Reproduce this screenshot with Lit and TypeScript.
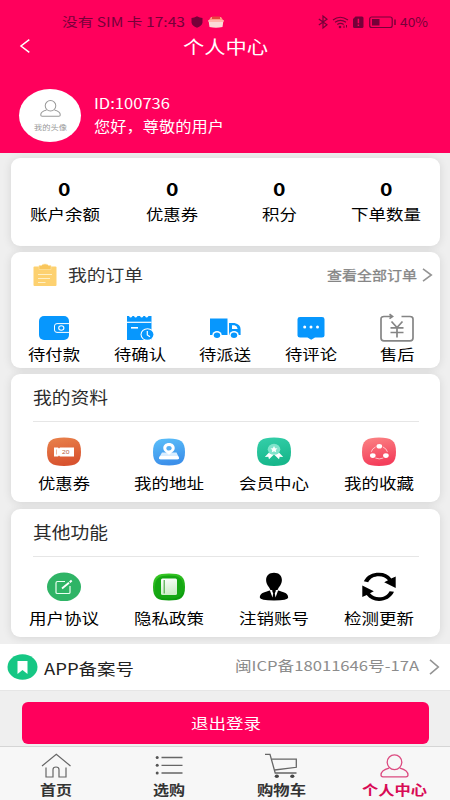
import { LitElement, html, svg, css } from "lit";
import { customElement, property } from "lit/decorators.js";

// One line of text drawn at a fixed advance width; the box centre is the optical centre of the glyphs.
@customElement("fit-text")
class FitText extends LitElement {
  @property() text = "";
  @property({ type: Number }) w = 60;
  @property({ type: Number }) size = 15;
  static styles = css`
    :host { display: block; flex: none; }
    svg { display: block; overflow: visible; }
    text { font-family: "Noto Sans CJK SC", sans-serif; fill: currentColor; }
  `;
  render() {
    const h = 20;
    return html`<svg width=${this.w} height=${h}>
      <text x="0" y=${h / 2 + this.size * 0.38} font-size=${this.size} textLength=${this.w} lengthAdjust="spacingAndGlyphs">${this.text}</text>
    </svg>`;
  }
}

const icon = (w: number, h: number, body: unknown) =>
  html`<svg width=${w} height=${h} viewBox="0 0 ${w} ${h}" fill="none">${body}</svg>`;

const person = (c: string, sw: number) => svg`
  <ellipse cx="14.5" cy="8.2" rx="7.3" ry="7.4" stroke=${c} stroke-width=${sw}/>
  <path d="M9 14.2C4 15.6 1 18 1 21Q1 22.8 3 22.8H26Q28 22.8 28 21C28 18 25 15.6 20 14.2" stroke=${c} stroke-width=${sw}/>`;

const orders = [
  { label: "待付款", w: 52, icon: icon(30, 26, svg`
    <rect x="0" y="1" width="30" height="24" rx="5" fill="#0797fd"/>
    <path d="M30 8.6H18Q15.5 8.6 15.5 11V15Q15.5 17.4 18 17.4H30" stroke="#fff" stroke-width="1"/>
    <ellipse cx="22.3" cy="13" rx="2.6" ry="2.2" stroke="#fff" stroke-width="1.1"/>`) },
  { label: "待确认", w: 52, icon: icon(28, 26, svg`
    <path d="M1 1H3Q4.500 4 6.500 1H8Q9.500 4 11.500 1H14Q15.500 4 17.500 1H19Q20.500 4 22.500 1H25.500V25H1Z" fill="#0797fd"/>
    <path d="M1 7.300H25.500" stroke="#fff" stroke-width="1.200"/><path d="M5 12.800H12" stroke="#fff" stroke-width="1.600"/>
    <ellipse cx="21.500" cy="19.500" rx="7" ry="6.300" fill="#fff"/><ellipse cx="21.500" cy="19.500" rx="5.900" ry="5.200" fill="#0797fd"/>
    <path d="M21.300 16V20L24 21.700" stroke="#fff" stroke-width="1.200"/>`) },
  { label: "待派送", w: 52, icon: icon(32, 26, svg`
    <path d="M1 3.500H18.500V20H1Z" fill="#0797fd"/>
    <path d="M20 8H25.500Q31.600 9.500 31.600 14V20H20Z" fill="#0797fd"/>
    <path d="M23 10.200H25.500Q28.200 11 28.700 14H23Z" fill="#fff"/>
    <ellipse cx="8" cy="20" rx="4.700" ry="4" fill="#fff"/><ellipse cx="8" cy="20.300" rx="3.200" ry="2.700" fill="#0797fd"/>
    <ellipse cx="25" cy="20" rx="4.700" ry="4" fill="#fff"/><ellipse cx="25" cy="20.300" rx="3.200" ry="2.700" fill="#0797fd"/>`) },
  { label: "待评论", w: 52, icon: icon(28, 26, svg`
    <path d="M3 2H25Q27.500 2 27.500 4.300V20.500Q27.500 22.500 25 22.500H18L14.200 24.800L10.500 22.500H3Q.5 22.500 .5 20.500V4.300Q.5 2 3 2Z" fill="#0797fd"/>
    <g fill="#fff"><circle cx="7.700" cy="12" r="1.500"/><circle cx="14" cy="12" r="1.500"/><circle cx="20.500" cy="12" r="1.500"/></g>`) },
  { label: "售后", w: 34.500, icon: icon(34, 28, svg`
    <g stroke="#858585" stroke-width="1.700"><path d="M12 2.500H4Q1 2.500 1 5V24Q1 26.800 4 26.800H30Q33 26.800 33 24V5Q33 2.500 30 2.500H21.500"/>
    <path d="M9.500 .3L12.500 2.500L9.500 4.600"/><path d="M11.500 7.500L17 13.500L22.500 7.500M17 13.500V23.500M10.500 13.800H23.500M10.500 18.500H23.500"/></g>`) },
];

const squircle = (g: string) => svg`<path d="M17 .5C29.500 .5 34 3.500 34 14.800S29.500 29 17 29S0 26 0 14.800S4.500 .5 17 .5Z" fill="url(#${g})"/>`;
const grad = (id: string, a: string, b: string) => svg`<defs><linearGradient id=${id} x1="0" y1="0" x2=".25" y2="1"><stop stop-color=${a}/><stop offset="1" stop-color=${b}/></linearGradient></defs>`;

const mine = [
  { label: "优惠券", w: 52, icon: icon(34, 30, svg`${grad("go", "#e9834c", "#d8532f")}${squircle("go")}
    <path d="M7 10.500H11L12 11.500L13 10.500H27V19.500H13L12 18.500L11 19.500H7Z" fill="#fff"/>
    <path d="M9.500 12.500V17.500" stroke="#e9a98c" stroke-width=".8"/>
    <text x="15" y="16.900" font-size="5.200" textLength="7.500" lengthAdjust="spacingAndGlyphs" fill="#b8643f" font-family="Liberation Sans, sans-serif">20</text>`) },
  { label: "我的地址", w: 70, icon: icon(34, 30, svg`${grad("gb", "#5bc0fa", "#3c90ea")}
    <path d="M17 1.500C28.500 1.500 33 4.500 33 15S28.500 28.500 17 28.500S1 26 1 15S5.500 1.500 17 1.500Z" fill="url(#gb)"/>
    <path d="M10 15.500H24.500L27 20.700Q27.300 22.300 25.500 22.300H8.500Q6.700 22.300 7 20.700Z" fill="#d9edff"/>
    <path d="M8 19H26L27 21Q27 22.300 25.500 22.300H8.500Q7 22.300 7 21Z" fill="#fff"/>
    <path d="M17 6C20.500 6 22.700 8.300 22.700 11C22.700 14.300 19.500 15.800 17 17.700C14.500 15.800 11.300 14.300 11.300 11C11.300 8.300 13.500 6 17 6Z" fill="#fff"/>
    <ellipse cx="17" cy="11.200" rx="2.600" ry="2.300" fill="#55aff3"/>`) },
  { label: "会员中心", w: 70, icon: icon(34, 30, svg`${grad("gg", "#35cfaa", "#17b78b")}${squircle("gg")}
    <path d="M12 15.500L7.800 20L11.300 19.800L12 22.300L17 17.500L22 22.300L22.700 19.800L26.200 20L22 15.500Z" fill="#fff"/>
    <ellipse cx="17" cy="12.300" rx="6.300" ry="5.500" fill="#80e4cb"/>
    <path d="M17 9L18.100 11.200L20.500 11.400L18.700 13.100L19.200 15.300L17 14.200L14.800 15.300L15.300 13.100L13.500 11.400L15.900 11.200Z" fill="#fff"/>`) },
  { label: "我的收藏", w: 70, icon: icon(34, 30, svg`${grad("gr", "#fb8585", "#f43e5b")}${squircle("gr")}
    <g stroke="#ffd0d2" stroke-width=".9"><path d="M13.500 10Q10 11.700 9.300 14.800M21 10Q24.700 11.700 25.400 14.800M13.300 21Q17.300 22.800 21.300 21"/></g>
    <g fill="#fff"><ellipse cx="17.300" cy="9.300" rx="2.800" ry="2.300"/><ellipse cx="10.800" cy="18.600" rx="2.800" ry="2.300"/><ellipse cx="23.900" cy="18.600" rx="2.800" ry="2.300"/></g>`) },
];

const others = [
  { label: "用户协议", w: 70, icon: icon(34, 30, svg`<ellipse cx="17" cy="14.800" rx="17" ry="14.300" fill="#2fb466"/>
    <path d="M18 9.500H10.500Q9 9.500 9 11V20.500Q9 21.500 10.500 21.500H21.500Q23 21.500 23 20.500V14" stroke="#e9fff1" stroke-width="1.200"/>
    <path d="M15 16.500L22 10.700" stroke="#fff" stroke-width="1.800"/><path d="M22.700 10.200L24.700 8.500" stroke="#fff" stroke-width="2"/>`) },
  { label: "隐私政策", w: 70, icon: icon(34, 30, svg`${grad("gn", "#3ccb27", "#0b9c0c")}${grad("gp", "#ffffff", "#cdeec8")}
    <path d="M17 1.500C28.500 1.500 33 4 33 15S28.500 28.500 17 28.500S1 26 1 15S5.500 1.500 17 1.500Z" fill="url(#gn)"/>
    <path d="M17 3.500C27 3.500 31 6 31 15S27 26.500 17 26.500S3 24 3 15S7 3.500 17 3.500Z" fill="#15a713"/>
    <rect x="9" y="6.500" width="16" height="16.500" rx="1.500" fill="url(#gp)"/><path d="M12.200 8V21.500" stroke="#45a83f" stroke-width="1.100"/>`) },
  { label: "注销账号", w: 70, icon: icon(34, 30, svg`
    <path d="M17 .7C21.800 .7 24.900 3.500 24.900 8C24.900 12.500 22 14.500 20.500 18H13.500C12 14.500 9.100 12.500 9.100 8C9.100 3.500 12.200 .7 17 .7Z" fill="#000"/>
    <path d="M12.500 18.500L9 19.700C4.500 21 3 22.500 2.800 25.500Q3 28.500 17 28.500T31.200 25.500C31 22.500 29.500 21 25 19.700L21.500 18.500Z" fill="#000"/>
    <path d="M12.700 18L15.500 25.500L16.200 21.500L14.800 18ZM21.300 18L18.500 25.500L17.800 21.500L19.200 18Z" fill="#fff"/>
    <path d="M14.500 17.500H19.500L17 20Z" fill="#000"/>`) },
  { label: "检测更新", w: 70, icon: icon(34, 30, svg`<g fill="#000">
    <path d="M1.800 9.300C5 3 10.500 .7 17 .7C22.500 .7 26.500 2.600 29.300 6.500L33.700 4.500V16L22.200 10.300L26 8.300C23.500 5.400 20.800 4.300 17 4.300C11.800 4.300 8.300 6.300 6.200 10.300Z"/>
    <path d="M32 19.800C29 26 23.500 28.900 17 28.900C11.500 28.900 7.500 27 4.700 23.100L.3 25V13.600L11.800 19.300L8 21.300C10.500 24.200 13.200 25.300 17 25.300C22.200 25.300 25.200 23.400 27.600 19.300Z"/></g>`) },
];

const tabs = [
  { label: "首页", w: 32, icon: icon(30, 26, svg`<g stroke="#666" stroke-width="1.200"><path d="M1 13L15.300 1.200L29.500 13"/><path d="M5 14.500V24H12V16.500Q12 14 15 14T18 16.500V24H25V14.500"/></g>`) },
  { label: "选购", w: 32, icon: icon(28, 26, svg`<g stroke="#666" stroke-width="1.300"><path d="M6.500 4.500H27.500M6.500 12.300H27.500M6.500 20H27.500"/></g><g fill="#555"><circle cx="2.200" cy="4.500" r="1.500"/><circle cx="2.200" cy="12.300" r="1.500"/><circle cx="2.200" cy="20" r="1.500"/></g>`) },
  { label: "购物车", w: 49, icon: icon(34, 26, svg`<g stroke="#666" stroke-width="1.300"><path d="M1 1.300H6L11.200 20H32.500"/><path d="M7.800 6.200H32.300V14.300L10.700 17"/></g><g fill="#444"><ellipse cx="12.800" cy="23.300" rx="2.100" ry="1.800"/><ellipse cx="28.300" cy="23.300" rx="2.100" ry="1.800"/></g>`) },
  { label: "个人中心", w: 65, active: true, icon: icon(29, 25, person("#dc4b80", 1.3)) },
];

type Item = { label: string; w: number; icon: unknown; active?: boolean };

@customElement("app-root")
class AppRoot extends LitElement {
  static styles = css`
    :host { display: flex; flex-direction: column; height: 800px; width: 450px; overflow: hidden; background: #efefef; box-sizing: border-box; color: #111; }
    svg { display: block; flex: none; overflow: visible; }
    header { height: 153px; background: #ff005c; color: #fff; flex: none; box-sizing: border-box; }
    .status { display: flex; align-items: center; height: 20px; padding: 12px 0 0 62px; color: #760039; }
    .status .sim { margin-right: 6px; }
    .status .box { margin-left: 5px; }
    .status .right { display: flex; align-items: center; margin-left: auto; padding-right: 22px; }
    .status .pct { margin-left: -8px; }
    .bar { display: grid; grid-template-columns: 1fr 86px 1fr; align-items: center; height: 30px; padding-left: 20px; padding-right: 20px; }
    .bar .back { padding-bottom: 2px; }
    .bar .title { padding-left: 1px; }
    .user { display: flex; align-items: center; padding: 27px 0 0 19px; }
    .avatar { width: 62px; height: 53px; border-radius: 50%; background: #fff; color: #999; display: flex; flex-direction: column; align-items: center; box-sizing: border-box; padding-top: 11px; }
    .who { margin-left: 13px; display: flex; flex-direction: column; gap: 3px; margin-top: -3px; }
    .card { flex: none; margin-left: 11px; width: 429px; background: #fff; border-radius: 9px; box-sizing: border-box; box-shadow: 0 1px 10px #0000001c; }
    .stats { margin-top: 5px; height: 88px; display: grid; grid-template-columns: repeat(4, 1fr); justify-items: center; padding-top: 21px; color: #000; }
    .stat { display: flex; flex-direction: column; align-items: center; gap: 5px; }
    .bold { font-weight: 700; }
    .orders { margin-top: 6px; height: 116px; }
    .ohead { display: flex; align-items: center; height: 46px; padding-left: 22px; color: #333; }
    .ohead .t { margin-left: 11px; }
    .ohead .more { margin-left: auto; display: flex; align-items: center; gap: 5px; color: #858585; padding-right: 8px; }
    .ohead .more fit-text { stroke: currentColor; stroke-width: 0.3px; }
    .ogrid { display: grid; grid-template-columns: repeat(5, 1fr); padding-top: 15px; }
    .item { display: flex; flex-direction: column; align-items: center; color: #000; }
    .ogrid .pic { height: 29px; display: flex; align-items: center; justify-content: center; margin-bottom: 2px; }
    .group { margin-top: 6px; height: 128px; }
    .group + .group { margin-top: 7px; }
    .ghead { margin: 0 21px 0 22px; height: 47px; border-bottom: 1px solid #e6e6e6; display: flex; align-items: center; color: #2b2b2b; box-sizing: content-box; }
    .ggrid { width: 420px; display: grid; grid-template-columns: repeat(4, 1fr); padding-top: 15px; }
    .ggrid .item fit-text { margin-top: 5.5px; }
    .record { flex: none; margin-top: 7px; height: 47px; background: #fff; display: flex; align-items: center; padding: 0 11px 0 7px; box-sizing: border-box; border-bottom: 1px solid #e6e6e6; color: #222; }
    .record .name { margin-left: 6px; padding-top: 3px; }
    .record .no { margin-left: auto; display: flex; gap: 10px; align-items: center; color: #8c8c8c; }
    .record .no fit-text { padding-bottom: 2px; }
    .logout { flex: none; margin: 11px 21px 0 22px; height: 42px; border-radius: 6px; background: #ff005c; color: #fff; display: flex; align-items: center; justify-content: center; border: 0; padding: 0; }
    nav { flex: none; margin-top: 2px; height: 54px; box-sizing: border-box; background: #f7f7f7; border-top: 1px solid #d5d5d5; display: grid; grid-template-columns: repeat(4, 1fr); padding-top: 6px; }
    nav .item { color: #333; font-weight: 700; }
    nav .active { color: #d80a55; padding-left: 2px; }
    nav .pic { height: 26px; display: flex; align-items: center; }
    nav .active .pic { padding-right: 1px; }
    nav fit-text { margin-top: 1px; }
  `;

  item(i: Item, size: number) {
    return html`<div class="item ${i.active ? "active" : ""}"><div class="pic">${i.icon}</div><fit-text .text=${i.label} .w=${i.w} .size=${size}></fit-text></div>`;
  }

  chevron(h: number) {
    return icon(10, h, svg`<path d="M1 .8L9.300 ${h / 2}L1 ${h - 0.8}" stroke="#949494" stroke-width="1.600"/>`);
  }

  group(title: string, items: Item[]) {
    return html`<section class="card group">
      <div class="ghead"><fit-text .text=${title} .w=${75} .size=${16.5}></fit-text></div>
      <div class="ggrid">${items.map((i) => this.item(i, 15))}</div>
    </section>`;
  }

  render() {
    return html`
      <header>
        <div class="status">
          <fit-text class="sim" .text=${"没有 SIM 卡 17:43"} .w=${123} .size=${12.5}></fit-text>
          ${icon(12, 12, svg`<path d="M6 .3Q9 2 11.500 2V6.500Q11 10 6 11.800Q1 10 .5 6.500V2Q3 2 6 .3Z" fill="#760039"/>`)}
          <div class="box">${icon(16, 12, svg`<path d="M1 4L3 1H13L15 4Z" fill="#ff9c87"/><path d="M4 .5H12V3H4Z" fill="#e8433f"/><path d="M.5 4H15.500L14.500 11Q8 12.500 1.500 11Z" fill="#fbdcd8"/><path d="M.5 4H15.500V6H.5Z" fill="#ffb8ad"/>`)}</div>
          <div class="right">
            ${icon(90, 14, svg`<g stroke="#760039" stroke-width="1.200">
              <path d="M.8 4L9 9.800L5 13V1L9 4.200L.8 10"/>
              <path d="M15 5Q22 -.5 30 5M17 7.300Q22.500 3.300 28 7.300M19.300 9.500Q22.500 7.300 25.700 9.500"/></g>
              <circle cx="22" cy="12" r="1.300" fill="#760039"/><path d="M26 10.500V13M28.500 10V12.500" stroke="#760039"/>
              <path d="M37.500 1.500H44Q45.500 1.500 45.500 3V11.500Q45.500 13 44 13H36.500Q35 13 35 11.500V4Z" fill="#760039"/>
              <path d="M40.400 3.800V8.300M40.400 9.500V11" stroke="#ff005c" stroke-width="1.500"/>
              <rect x="51.700" y="2" width="22.500" height="10.500" rx="2" stroke="#760039" stroke-width="1.200"/><rect x="54" y="4" width="7.500" height="6.500" fill="#760039"/>
              <path d="M77 4.500V10" stroke="#760039" stroke-width="1.500"/>`)}
            <fit-text class="pct" .text=${"40%"} .w=${28} .size=${12.5}></fit-text>
          </div>
        </div>
        <div class="bar">
          <div class="back">${icon(10, 14, svg`<path d="M9.300 .7L1 7L9.300 13.300" stroke="#fff" stroke-width="1.500"/>`)}</div>
          <fit-text class="title" .text=${"个人中心"} .w=${85} .size=${18}></fit-text>
        </div>
        <div class="user">
          <div class="avatar">
            <svg width="21" height="17" viewBox="0 0 29 24" preserveAspectRatio="none" fill="none">${person("#999", 1.4)}</svg>
            <fit-text .text=${"我的头像"} .w=${33} .size=${6.8}></fit-text>
          </div>
          <div class="who">
            <fit-text .text=${"ID:100736"} .w=${76} .size=${14.5}></fit-text>
            <fit-text .text=${"您好，尊敬的用户"} .w=${130} .size=${14.5}></fit-text>
          </div>
        </div>
      </header>
      <section class="card stats">
        ${[["账户余额", 70], ["优惠券", 52], ["积分", 35], ["下单数量", 70]].map(
          ([l, w]) => html`<div class="stat"><fit-text class="bold" .text=${"0"} .w=${12.5} .size=${17.5}></fit-text><fit-text .text=${l} .w=${w} .size=${15}></fit-text></div>`
        )}
      </section>
      <section class="card orders">
        <div class="ohead">
          ${icon(24, 22, svg`<path d="M1.500 2.500H22.500Q23.500 2.500 23.500 3.500V21Q23.500 22 22.500 22H1.500Q.5 22 .5 21V3.500Q.5 2.500 1.500 2.500Z" fill="#fdd170"/>
            <path d="M6 1.500H8.500Q9 0 12 0T15.500 1.500H18V5.500H6Z" fill="#f9c65c" stroke="#ffe5a8" stroke-width=".6"/>
            <path d="M5 10.500H19M5 14.500H17M5 18.500H12.500" stroke="#fff0c5" stroke-width="1"/>`)}
          <fit-text class="t" .text=${"我的订单"} .w=${75} .size=${16}></fit-text>
          <div class="more"><fit-text .text=${"查看全部订单"} .w=${90} .size=${13}></fit-text>${this.chevron(14)}</div>
        </div>
        <div class="ogrid">${orders.map((i) => this.item(i, 15))}</div>
      </section>
      ${this.group("我的资料", mine)}
      ${this.group("其他功能", others)}
      <section class="record">
        ${icon(31, 26, svg`<ellipse cx="15.500" cy="13" rx="15" ry="12.700" fill="#16c784"/><path d="M10.500 7H20.500V20L15.500 16L10.500 20Z" fill="#fff"/>`)}
        <fit-text class="name" .text=${"APP备案号"} .w=${90} .size=${15.5}></fit-text>
        <div class="no"><fit-text .text=${"闽ICP备18011646号-17A"} .w=${184} .size=${13.5}></fit-text>${this.chevron(16)}</div>
      </section>
      <button class="logout"><fit-text .text=${"退出登录"} .w=${70} .size=${14.5}></fit-text></button>
      <nav>${tabs.map((i) => this.item(i, 13.5))}</nav>
    `;
  }
}
